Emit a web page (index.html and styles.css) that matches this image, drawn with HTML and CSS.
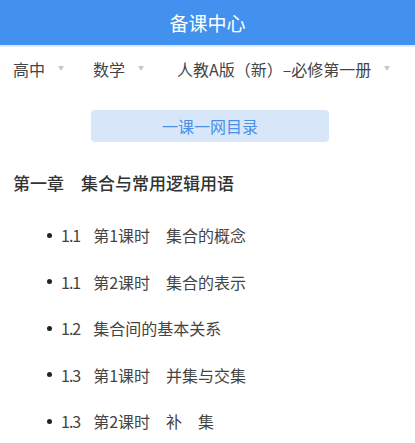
FILE: index.html
```html
<!doctype html>
<html lang="zh-CN">
<head>
    <meta charset="UTF-8">
    <meta name="viewport" content="width=device-width, initial-scale=1.0">
    <title>备课中心</title>
    <link rel="stylesheet" href="styles.css">
</head>
<body>
<div class="header">备课中心</div>
<div class="filter">
    <span class="filter-item item-stage">高中</span>
    <span class="filter-item item-subject">数学</span>
    <span class="filter-item">人教A版（新）–必修第一册</span>
</div>
<div class="catalog-btn">一课一网目录</div>
<div class="chapter">第一章　集合与常用逻辑用语</div>
<ul class="lesson-list">
    <li><span class="num">1.1</span>第1课时　集合的概念</li>
    <li><span class="num">1.1</span>第2课时　集合的表示</li>
    <li><span class="num">1.2</span>集合间的基本关系</li>
    <li><span class="num">1.3</span>第1课时　并集与交集</li>
    <li><span class="num">1.3</span>第2课时　补　集</li>
</ul>
</body>
</html>
```

FILE: styles.css
```css
*{
    padding: 0;
    margin: 0;
}
body{
    background-color: #fff;
    font-family: "PingFang SC", "Noto Sans CJK SC", "Noto Sans", sans-serif;
    color: #444;
}
.header{
    height: 45px;
    line-height: 45px;
    text-align: center;
    font-size: 19px;
    font-weight: 400;
    color: #fff;
    background-color: #4391ee;
    border-bottom: 2px solid #dfe9f7;
}
.filter{
    display: flex;
    align-items: center;
    height: 43px;
    padding-left: 13px;
    font-size: 16px;
    color: #444;
}
.filter-item{
    display: flex;
    align-items: center;
}
.filter-item::after{
    content: "";
    width: 0;
    height: 0;
    margin-left: 13px;
    margin-top: -1px;
    border-left: 3.5px solid transparent;
    border-right: 3.5px solid transparent;
    border-top: 5px solid #c9c9c9;
}
.item-stage{
    margin-right: 29px;
}
.item-subject{
    margin-right: 33px;
}
.catalog-btn{
    width: 238px;
    height: 32px;
    line-height: 32px;
    margin: 20px 0 0 91px;
    text-align: center;
    font-size: 16px;
    color: #4a90e6;
    background-color: #d7e7f9;
    border-radius: 4px;
}
.chapter{
    margin-top: 29px;
    padding-left: 13px;
    line-height: 24px;
    font-size: 17px;
    font-weight: 500;
    color: #333;
}
.lesson-list{
    list-style: none;
    margin-top: 17px;
    padding-left: 47px;
}
.lesson-list li{
    display: flex;
    align-items: center;
    line-height: 22px;
    padding: 12px 0 12.5px;
    font-size: 16px;
    color: #444;
}
.lesson-list li::before{
    content: "";
    width: 5px;
    height: 5px;
    margin-right: 9px;
    border-radius: 50%;
    background-color: #222;
}
.num{
    margin-right: 13px;
    letter-spacing: -1px;
}
```
